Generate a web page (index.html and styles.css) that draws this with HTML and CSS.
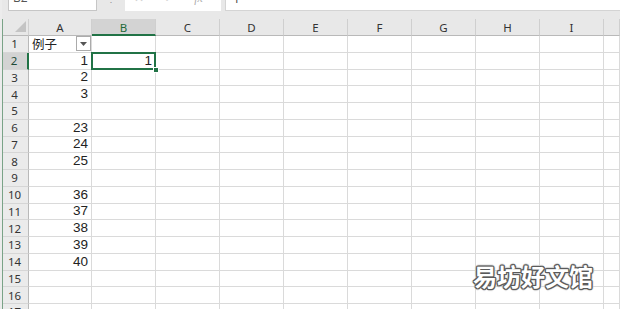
FILE: index.html
```html
<!DOCTYPE html>
<html>
<head>
<meta charset="utf-8">
<link rel="stylesheet" href="styles.css">
</head>
<body>
<div class="app">
  <div class="fbar">
    <div class="namebox"><span class="nb-text">B2</span></div>
    <div class="fsep">⋮</div>
    <div class="fbtns"><span class="fb">✕</span><span class="fb">✓</span><span class="fb fx">fx</span></div>
    <div class="finput"><span class="fi-text">1</span></div>
  </div>
  <div class="sheet">
    <div class="corner"><svg width="11" height="11" viewBox="0 0 11 11"><polygon points="11,0 11,11 0,11" fill="#c4c4c4"/></svg></div>
    <div class="ch">A</div><div class="ch sel">B</div><div class="ch">C</div><div class="ch">D</div><div class="ch">E</div><div class="ch">F</div><div class="ch">G</div><div class="ch">H</div><div class="ch">I</div><div class="ch"></div>

    <div class="rh">1</div><div class="c filter"><span class="cjk">例子</span><span class="dd"><svg width="7" height="4" viewBox="0 0 7 4"><polygon points="0,0 7,0 3.5,4" fill="#555"/></svg></span></div><div class="c"></div><div class="c"></div><div class="c"></div><div class="c"></div><div class="c"></div><div class="c"></div><div class="c"></div><div class="c"></div><div class="c"></div>

    <div class="rh sel">2</div><div class="c n">1</div><div class="c n active">1<span class="handle"></span></div><div class="c"></div><div class="c"></div><div class="c"></div><div class="c"></div><div class="c"></div><div class="c"></div><div class="c"></div><div class="c"></div>

    <div class="rh">3</div><div class="c n">2</div><div class="c"></div><div class="c"></div><div class="c"></div><div class="c"></div><div class="c"></div><div class="c"></div><div class="c"></div><div class="c"></div><div class="c"></div>
    <div class="rh">4</div><div class="c n">3</div><div class="c"></div><div class="c"></div><div class="c"></div><div class="c"></div><div class="c"></div><div class="c"></div><div class="c"></div><div class="c"></div><div class="c"></div>
    <div class="rh">5</div><div class="c n"></div><div class="c"></div><div class="c"></div><div class="c"></div><div class="c"></div><div class="c"></div><div class="c"></div><div class="c"></div><div class="c"></div><div class="c"></div>
    <div class="rh">6</div><div class="c n">23</div><div class="c"></div><div class="c"></div><div class="c"></div><div class="c"></div><div class="c"></div><div class="c"></div><div class="c"></div><div class="c"></div><div class="c"></div>
    <div class="rh">7</div><div class="c n">24</div><div class="c"></div><div class="c"></div><div class="c"></div><div class="c"></div><div class="c"></div><div class="c"></div><div class="c"></div><div class="c"></div><div class="c"></div>
    <div class="rh">8</div><div class="c n">25</div><div class="c"></div><div class="c"></div><div class="c"></div><div class="c"></div><div class="c"></div><div class="c"></div><div class="c"></div><div class="c"></div><div class="c"></div>
    <div class="rh">9</div><div class="c n"></div><div class="c"></div><div class="c"></div><div class="c"></div><div class="c"></div><div class="c"></div><div class="c"></div><div class="c"></div><div class="c"></div><div class="c"></div>
    <div class="rh">10</div><div class="c n">36</div><div class="c"></div><div class="c"></div><div class="c"></div><div class="c"></div><div class="c"></div><div class="c"></div><div class="c"></div><div class="c"></div><div class="c"></div>
    <div class="rh">11</div><div class="c n">37</div><div class="c"></div><div class="c"></div><div class="c"></div><div class="c"></div><div class="c"></div><div class="c"></div><div class="c"></div><div class="c"></div><div class="c"></div>
    <div class="rh">12</div><div class="c n">38</div><div class="c"></div><div class="c"></div><div class="c"></div><div class="c"></div><div class="c"></div><div class="c"></div><div class="c"></div><div class="c"></div><div class="c"></div>
    <div class="rh">13</div><div class="c n">39</div><div class="c"></div><div class="c"></div><div class="c"></div><div class="c"></div><div class="c"></div><div class="c"></div><div class="c"></div><div class="c"></div><div class="c"></div>
    <div class="rh">14</div><div class="c n">40</div><div class="c"></div><div class="c"></div><div class="c"></div><div class="c"></div><div class="c"></div><div class="c"></div><div class="c"></div><div class="c"></div><div class="c"></div>
    <div class="rh">15</div><div class="c n"></div><div class="c"></div><div class="c"></div><div class="c"></div><div class="c"></div><div class="c"></div><div class="c"></div><div class="c"></div><div class="c"></div><div class="c"></div>
    <div class="rh">16</div><div class="c n"></div><div class="c"></div><div class="c"></div><div class="c"></div><div class="c"></div><div class="c"></div><div class="c"></div><div class="c"></div><div class="c"></div><div class="c"></div>
    <div class="rh">17</div><div class="c n"></div><div class="c"></div><div class="c"></div><div class="c"></div><div class="c"></div><div class="c"></div><div class="c"></div><div class="c"></div><div class="c"></div><div class="c"></div>
  </div>
  <div class="watermark">易坊好文馆</div>
</div>
</body>
</html>
```

FILE: styles.css
```css
* { box-sizing: border-box; }
html, body { margin: 0; padding: 0; }
body {
  width: 620px;
  height: 309px;
  overflow: hidden;
  background: #e8e8e8;
  font-family: "Liberation Sans", Arial, sans-serif;
}
.app {
  position: relative;
  width: 620px;
  height: 309px;
  overflow: hidden;
  border-left: 2px solid #ececec;
}
.fbar {
  height: 11px;
  display: flex;
  margin-bottom: 8px;
  margin-left: -2px;
}
.namebox {
  margin-left: 8px;
  width: 89px;
  height: 11px;
  background: #fff;
  border: 1px solid #c6c6c6;
  border-top: none;
  overflow: hidden;
  display: flex;
  align-items: flex-end;
  padding-left: 4px;
}
.nb-text {
  font-family: "Open Sans", sans-serif;
  font-size: 12px;
  line-height: 12px;
  color: #555;
  margin-bottom: 6px;
}
.fsep {
  width: 28px;
  text-align: center;
  font-size: 10px;
  line-height: 6px;
  color: #9a9a9a;
  overflow: hidden;
  height: 5px;
}
.fbtns {
  width: 96px;
  height: 11px;
  background: #fff;
  display: flex;
  align-items: flex-end;
  overflow: hidden;
  padding-left: 9px;
  gap: 20px;
}
.fb {
  font-family: "DejaVu Sans", sans-serif;
  font-size: 12px;
  line-height: 12px;
  color: #cfcfcf;
  margin-bottom: 7px;
}
.fx {
  font-family: "Liberation Serif", serif;
  font-style: italic;
  color: #b0b0b0;
}
.finput {
  margin-left: 4px;
  flex: 1;
  height: 11px;
  background: #fff;
  border-bottom: 1px solid #d4d4d4;
  border-left: 1px solid #d4d4d4;
  overflow: hidden;
  display: flex;
  align-items: flex-end;
  padding-left: 7px;
}
.fi-text {
  font-family: "Open Sans", sans-serif;
  font-size: 12px;
  line-height: 12px;
  color: #444;
  margin-bottom: 5px;
}
.sheet {
  border-left: 1px solid #7aa387;
  display: grid;
  grid-template-columns: 26px 63px repeat(8, 64px) 1fr;
  grid-template-rows: 17px repeat(17, 16.75px);
  background: #fff;
}
.corner {
  background: #e8e8e8;
  border-bottom: 1px solid #b9b9b9;
  border-right: 1px solid #d0d0d0;
  display: flex;
  align-items: flex-end;
  justify-content: flex-end;
  padding: 0 2px 3px 0;
}
.corner svg { display: block; }
.ch {
  background: #e8e8e8;
  border-bottom: 1px solid #b9b9b9;
  border-right: 1px solid #cfcfcf;
  font-family: "Noto Sans", sans-serif;
  font-size: 11.5px;
  line-height: 16px;
  color: #333;
  text-align: center;
  padding-top: 1px;
}
.ch.sel {
  background: #d3d3d3;
  color: #1f6a3a;
  border-bottom: 2px solid #217346;
}
.rh {
  background: #ebebeb;
  border-right: 1px solid #b9b9b9;
  border-bottom: 1px solid #d6d6d6;
  font-family: "Noto Sans", sans-serif;
  font-size: 11.5px;
  color: #333;
  text-align: center;
  display: flex;
  align-items: center;
  justify-content: center;
  padding-right: 2px;
}
.rh.sel {
  background: #d3d3d3;
  color: #1d4a36;
  border-right: 2px solid #217346;
}
.c {
  border-right: 1px solid #dadada;
  border-bottom: 1px solid #dadada;
  font-size: 13.5px;
  color: #222;
  line-height: 14px;
  display: flex;
  align-items: flex-end;
  padding-bottom: 1px;
}
.c.n {
  justify-content: flex-end;
  padding-right: 3px;
}
.filter {
  justify-content: space-between;
  align-items: center;
  padding: 0 0 0 3px;
}
.cjk {
  font-family: "Noto Sans CJK SC", sans-serif;
  font-size: 12.5px;
  line-height: 14px;
  color: #222;
}
.dd {
  width: 15px;
  height: 15px;
  border: 1px solid #ababab;
  background: #fff;
  display: flex;
  align-items: center;
  justify-content: center;
  margin-right: 0;
}
.dd svg { display: block; }
.active {
  position: relative;
}
.active::after {
  content: "";
  position: absolute;
  left: -1px;
  top: -1px;
  right: -1px;
  bottom: -1px;
  border: 2px solid #217346;
}
.handle {
  position: absolute;
  right: -4px;
  bottom: -4px;
  width: 6px;
  height: 6px;
  background: #217346;
  border: 1px solid #fff;
  z-index: 2;
}
.watermark {
  position: absolute;
  left: 471px;
  top: 263px;
  font-family: "Noto Sans CJK SC", sans-serif;
  font-weight: 700;
  font-size: 24px;
  line-height: 26px;
  color: #fff;
  -webkit-text-stroke: 0;
  text-shadow:
    1px 0 0 #5a5a5a, -1px 0 0 #5a5a5a, 0 1px 0 #5a5a5a, 0 -1px 0 #5a5a5a,
    1px 1px 0 #5a5a5a, -1px -1px 0 #5a5a5a, 1px -1px 0 #5a5a5a, -1px 1px 0 #5a5a5a,
    2px 0 1px #c8c8c8, -2px 0 1px #c8c8c8, 0 2px 1px #c8c8c8, 0 -2px 1px #c8c8c8;
}
```
